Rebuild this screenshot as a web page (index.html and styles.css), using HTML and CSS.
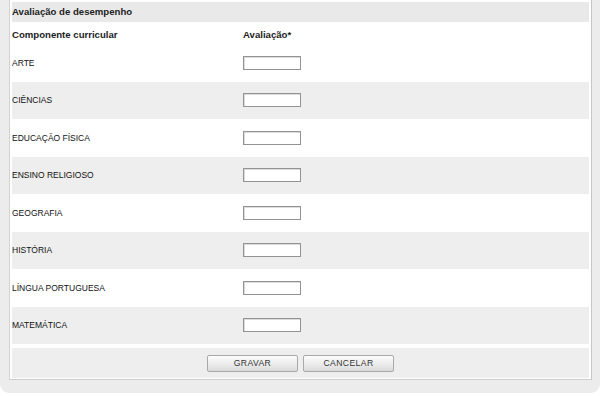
FILE: index.html
```html
<!DOCTYPE html>
<html lang="pt">
<head>
  <meta charset="UTF-8" />
  <title>Avaliação de desempenho</title>
  <link rel="stylesheet" href="styles.css">
</head>
<body>
  <div class="wrap">
    <div class="panel">
      <div class="panel-title">Avaliação de desempenho</div>
      <div class="row head">
        <span>Componente curricular</span>
        <span>Avaliação*</span>
      </div>
      <div class="row"><span>ARTE</span><input type="text" class="grade" /></div>
      <div class="row alt"><span>CIÊNCIAS</span><input type="text" class="grade" /></div>
      <div class="row"><span>EDUCAÇÃO FÍSICA</span><input type="text" class="grade" /></div>
      <div class="row alt"><span>ENSINO RELIGIOSO</span><input type="text" class="grade" /></div>
      <div class="row"><span>GEOGRAFIA</span><input type="text" class="grade" /></div>
      <div class="row alt"><span>HISTÓRIA</span><input type="text" class="grade" /></div>
      <div class="row"><span>LÍNGUA PORTUGUESA</span><input type="text" class="grade" /></div>
      <div class="row alt"><span>MATEMÁTICA</span><input type="text" class="grade" /></div>
      <div class="actions">
        <button type="button" class="btn">GRAVAR</button>
        <button type="button" class="btn">CANCELAR</button>
      </div>
    </div>
  </div>
</body>
</html>
```

FILE: styles.css
```css
body {
  margin: 0;
  padding: 0;
  background: #fff;
  font-family: 'Liberation Sans', Arial, sans-serif;
  color: #111;
}

.wrap {
  width: 600px;
  height: 393px;
  box-sizing: border-box;
  background: #ececec;
  border-radius: 0 0 9px 9px;
  padding: 0 8px 0 9px;
}

.panel {
  background: #fff;
  border-left: 1px solid #d2d2d2;
  border-right: 1px solid #c6c6c6;
  border-bottom: 1px solid #cdcdcd;
  padding: 2px 2px 1px 2px;
}

.panel-title {
  height: 20px;
  line-height: 20px;
  background: #e9e9e9;
  font-size: 9.6px;
  font-weight: bold;
  color: #222;
}

.row {
  display: grid;
  grid-template-columns: 231px 1fr;
  align-items: center;
  height: 37.5px;
  font-size: 8.5px;
}

.row.head {
  height: 20px;
  margin-top: 2px;
  font-size: 9.6px;
  font-weight: bold;
  color: #222;
}

.row.alt {
  background: #eeeeee;
}

.grade {
  width: 58px;
  height: 14px;
  box-sizing: border-box;
  margin: 0;
  padding: 0 2px;
  border: 1px solid #939393;
  box-shadow: inset 1px 1px 0 #dcdcdc;
  background: #fff;
  font-size: 9px;
}

.actions {
  margin-top: 4px;
  height: 30px;
  background: #eeeeee;
  display: flex;
  justify-content: center;
  align-items: center;
  gap: 5px;
}

.btn {
  width: 91px;
  height: 17px;
  margin: 0;
  padding: 0;
  border: 1px solid #a9a9a9;
  border-radius: 2px;
  background: linear-gradient(#fdfdfd, #e9e9e9 60%, #dadada);
  font-family: 'Liberation Sans', Arial, sans-serif;
  font-size: 8.6px;
  color: #333;
  letter-spacing: 0.4px;
}
```
